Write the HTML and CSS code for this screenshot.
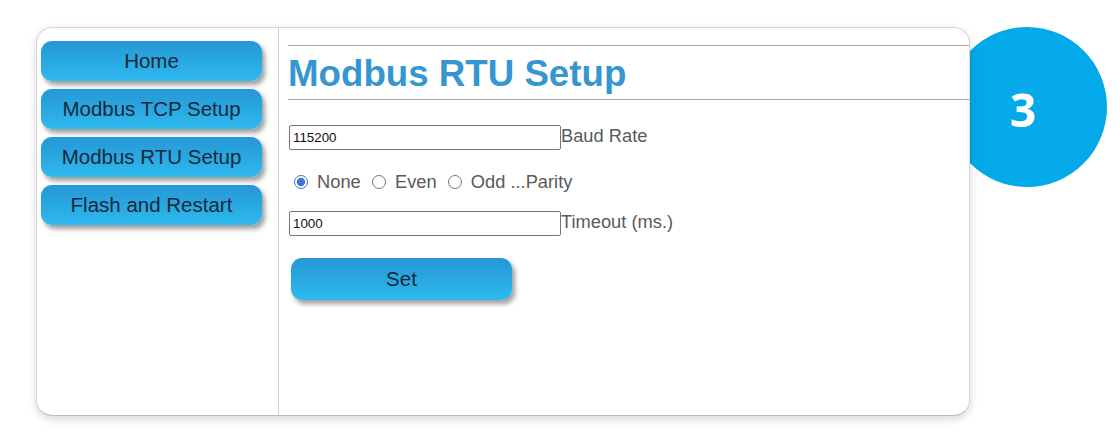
FILE: index.html
```html
<!DOCTYPE html>
<html>
<head>
<meta charset="utf-8">
<link rel="stylesheet" href="styles.css">
</head>
<body>
<div class="badge">3</div>
<div class="card">
  <nav class="sidebar">
    <a class="nav-btn">Home</a>
    <a class="nav-btn">Modbus TCP Setup</a>
    <a class="nav-btn">Modbus RTU Setup</a>
    <a class="nav-btn">Flash and Restart</a>
  </nav>
  <main class="main">
    <div class="rule"></div>
    <h1 class="title">Modbus RTU Setup</h1>
    <div class="rule rule-2"></div>
    <div class="row row-baud">
      <input class="field" type="text" value="115200"><span class="label">Baud Rate</span>
    </div>
    <div class="row row-parity">
      <input type="radio" name="p" checked> None <input type="radio" name="p"> Even <input type="radio" name="p"> Odd ...Parity
    </div>
    <div class="row row-timeout">
      <input class="field" type="text" value="1000"><span class="label">Timeout (ms.)</span>
    </div>
    <button class="set-btn">Set</button>
  </main>
</div>
</body>
</html>
```
FILE: styles.css
```css
html, body {
  margin: 0;
  padding: 0;
  background: #ffffff;
}
body {
  width: 1120px;
  height: 442px;
  position: relative;
  overflow: hidden;
  padding: 27px 0 0 36px;
  box-sizing: border-box;
  font-family: "Liberation Sans", Arial, sans-serif;
}
.badge {
  position: absolute;
  left: 947px;
  top: 27px;
  width: 160px;
  height: 160px;
  border-radius: 50%;
  background: #03a9e8;
  color: #ffffff;
  font-family: "Open Sans", sans-serif;
  font-weight: 700;
  font-size: 46px;
  display: flex;
  align-items: center;
  justify-content: center;
  padding: 4px 8px 0 0;
  box-sizing: border-box;
  z-index: 0;
}
.card {
  position: relative;
  z-index: 1;
  width: 934px;
  height: 389px;
  box-sizing: border-box;
  background: #ffffff;
  border: 1px solid #d6d6d6;
  border-bottom-color: #bdbdbd;
  border-radius: 16px;
  box-shadow: 0 3px 8px rgba(0, 0, 0, 0.16);
  display: flex;
}
.sidebar {
  width: 242px;
  box-sizing: border-box;
  border-right: 1px solid #d0d0d0;
  padding: 13px 0 0 4px;
  display: flex;
  flex-direction: column;
  gap: 8px;
}
.nav-btn, .set-btn {
  display: flex;
  align-items: center;
  justify-content: center;
  width: 221px;
  height: 40px;
  border-radius: 11px;
  background: linear-gradient(to bottom, #2697d6 0%, #2aabe4 60%, #2fbaee 100%);
  box-shadow: 3px 4px 5px rgba(0, 0, 0, 0.38);
  color: #15283a;
  font-size: 20.5px;
  font-family: "Liberation Sans", Arial, sans-serif;
  cursor: pointer;
}
.main {
  flex: 1;
  padding: 17px 0 0 9px;
  display: flex;
  flex-direction: column;
  align-items: flex-start;
}
.rule {
  align-self: stretch;
  height: 0;
  border-top: 1px solid #a8a8a8;
}
.rule-2 {
  margin-top: 5px;
}
.title {
  margin: 8px 0 0 0;
  font-size: 36.7px;
  line-height: 40px;
  font-weight: 700;
  color: #3696d2;
}
.row {
  display: flex;
  align-items: baseline;
  font-size: 18.3px;
  color: #5a5a5a;
}
.row-baud {
  margin-top: 25px;
}
.row-parity {
  display: block;
  margin-top: 22px;
  line-height: 20px;
}
.row-parity input {
  width: 14px;
  height: 14px;
  margin: 0 4px 0 6px;
  accent-color: #3a76cf;
  vertical-align: -1px;
}
.row-timeout {
  margin-top: 19px;
}
.field {
  width: 272px;
  height: 25px;
  box-sizing: border-box;
  margin: 0 0 0 1px;
  padding: 1px 3px;
  border: 1px solid #767676;
  border-radius: 2px;
  font-family: "Liberation Sans", Arial, sans-serif;
  font-size: 13.33px;
  color: #111111;
}
.label {
  font-size: 18.3px;
}
.set-btn {
  margin: 22px 0 0 3px;
  height: 42px;
  border: none;
  padding: 0;
}
```
